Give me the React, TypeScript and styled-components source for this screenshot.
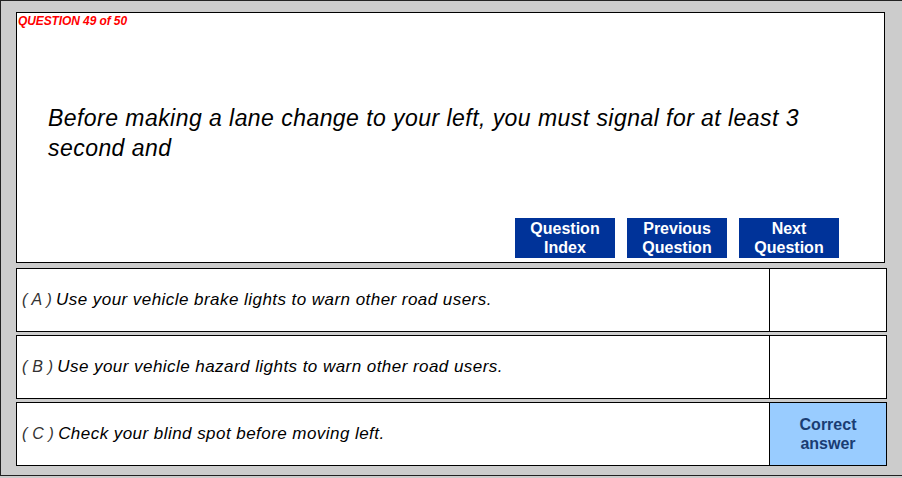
import React, { FunctionComponent } from "react";
import styled, { createGlobalStyle } from "styled-components";

const GlobalStyle = createGlobalStyle`
  html, body {
    margin: 0;
    padding: 0;
    background: #cccccc;
  }
`;

const Frame = styled.div`
  box-sizing: border-box;
  width: 902px;
  height: 476px;
  background: #cccccc;
  border-top: 1px solid #222;
  border-left: 1px solid #222;
  border-bottom: 1px solid #222;
  padding: 11px 0 0 15px;
  font-family: "Liberation Sans", Arial, sans-serif;
  display: flex;
  flex-direction: column;
`;

const QuestionBox = styled.div`
  box-sizing: border-box;
  width: 869px;
  height: 251px;
  background: #fff;
  border: 1px solid #000;
  padding: 2px 0 0 1px;
  display: flex;
  flex-direction: column;
`;

const Counter = styled.div`
  color: #ff0000;
  font-size: 12px;
  font-weight: bold;
  font-style: italic;
  line-height: 13px;
  letter-spacing: -0.1px;
`;

const QuestionText = styled.div`
  margin: 75px 0 0 30px;
  font-size: 23px;
  font-style: italic;
  line-height: 30px;
  letter-spacing: 0.45px;
  color: #000;
  width: 790px;
`;

const ButtonRow = styled.div`
  margin-top: auto;
  margin-bottom: 4px;
  padding-left: 497px;
  display: flex;
  gap: 12px;
`;

const NavButton = styled.div`
  width: 100px;
  height: 40px;
  background: #003399;
  color: #fff;
  font-size: 16px;
  font-weight: bold;
  line-height: 19px;
  text-align: center;
  display: flex;
  align-items: center;
  justify-content: center;
`;

const Options = styled.div`
  margin-top: 5px;
  display: flex;
  flex-direction: column;
  gap: 3px;
`;

const OptionRow = styled.div`
  box-sizing: border-box;
  width: 871px;
  height: 64px;
  border: 1px solid #000;
  background: #fff;
  display: flex;
`;

const OptionText = styled.div`
  flex: 1;
  display: flex;
  align-items: center;
  padding-left: 5px;
  font-size: 17px;
  font-style: italic;
  letter-spacing: 0.45px;
  color: #000;
`;

const Letter = styled.span`
  font-size: 16px;
  letter-spacing: 0.2px;
  color: #333;
  margin-right: 4px;
  white-space: pre;
`;

const AnswerCell = styled.div<{ $correct?: boolean }>`
  width: 116px;
  border-left: 1px solid #000;
  background: ${(p) => (p.$correct ? "#99ccff" : "#fff")};
  color: #1a3d73;
  font-size: 16px;
  font-weight: bold;
  line-height: 19px;
  text-align: center;
  display: flex;
  align-items: center;
  justify-content: center;
`;

const options = [
  { key: "A", text: "Use your vehicle brake lights to warn other road users.", correct: false },
  { key: "B", text: "Use your vehicle hazard lights to warn other road users.", correct: false },
  { key: "C", text: "Check your blind spot before moving left.", correct: true },
];

const App: FunctionComponent<{}> = () => {
  return (
    <>
      <GlobalStyle />
      <Frame>
        <QuestionBox>
          <Counter>QUESTION 49 of 50</Counter>
          <QuestionText>
            Before making a lane change to your left, you must signal for at least 3 second and
          </QuestionText>
          <ButtonRow>
            <NavButton>Question<br />Index</NavButton>
            <NavButton>Previous<br />Question</NavButton>
            <NavButton>Next<br />Question</NavButton>
          </ButtonRow>
        </QuestionBox>
        <Options>
          {options.map((o) => (
            <OptionRow key={o.key}>
              <OptionText>
                <Letter>( {o.key} )</Letter>
                {o.text}
              </OptionText>
              <AnswerCell $correct={o.correct}>
                {o.correct && (
                  <span>Correct<br />answer</span>
                )}
              </AnswerCell>
            </OptionRow>
          ))}
        </Options>
      </Frame>
    </>
  );
};

export default App;
